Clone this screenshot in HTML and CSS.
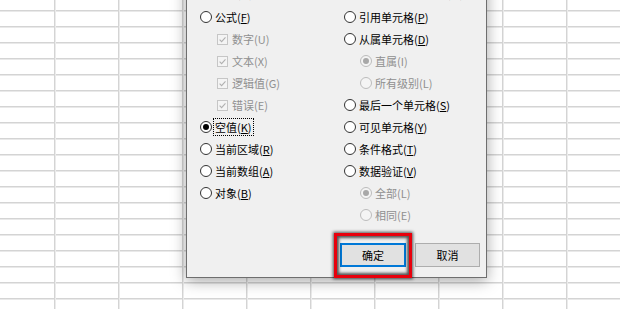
FILE: index.html
```html
<!DOCTYPE html>
<html lang="zh-CN">
<head>
  <meta charset="UTF-8">
  <meta name="viewport" content="width=device-width, initial-scale=1">
  <title>定位条件</title>
  <link rel="stylesheet" href="styles.css">
</head>
<body>
  <div class="sheet">
    <div class="dialog">
      <div class="options">
        <div class="col">
          <div class="opt cut"><span class="radio"></span>常量(<u>O</u>)</div>
          <div class="opt"><span class="radio"></span>公式(<u>F</u>)</div>
          <div class="opt sub off"><span class="check"><svg viewBox="0 0 10 10"><path d="M1.8 5.2 4 7.4 8.3 2.6"/></svg></span>数字(U)</div>
          <div class="opt sub off"><span class="check"><svg viewBox="0 0 10 10"><path d="M1.8 5.2 4 7.4 8.3 2.6"/></svg></span>文本(X)</div>
          <div class="opt sub off"><span class="check"><svg viewBox="0 0 10 10"><path d="M1.8 5.2 4 7.4 8.3 2.6"/></svg></span>逻辑值(G)</div>
          <div class="opt sub off"><span class="check"><svg viewBox="0 0 10 10"><path d="M1.8 5.2 4 7.4 8.3 2.6"/></svg></span>错误(E)</div>
          <div class="opt"><span class="radio on focus-radio"></span><span class="focus">空值(<u>K</u>)</span></div>
          <div class="opt"><span class="radio"></span>当前区域(<u>R</u>)</div>
          <div class="opt"><span class="radio"></span>当前数组(<u>A</u>)</div>
          <div class="opt"><span class="radio"></span>对象(<u>B</u>)</div>
        </div>
        <div class="col">
          <div class="opt cut"><span class="radio"></span>列内容差异单元格(<u>M</u>)</div>
          <div class="opt"><span class="radio"></span>引用单元格(<u>P</u>)</div>
          <div class="opt"><span class="radio"></span>从属单元格(<u>D</u>)</div>
          <div class="opt sub off"><span class="radio on"></span>直属(I)</div>
          <div class="opt sub off"><span class="radio"></span>所有级别(L)</div>
          <div class="opt"><span class="radio"></span>最后一个单元格(<u>S</u>)</div>
          <div class="opt"><span class="radio"></span>可见单元格(<u>Y</u>)</div>
          <div class="opt"><span class="radio"></span>条件格式(<u>T</u>)</div>
          <div class="opt"><span class="radio"></span>数据验证(<u>V</u>)</div>
          <div class="opt sub off"><span class="radio on"></span>全部(L)</div>
          <div class="opt sub off"><span class="radio"></span>相同(E)</div>
        </div>
      </div>
      <div class="actions">
        <span class="mark"><button class="btn btn-default">确定</button></span>
        <button class="btn">取消</button>
      </div>
    </div>
  </div>
</body>
</html>
```

FILE: styles.css
```css
body {
  margin: 0;
  font-family: "Noto Sans CJK SC", "Noto Sans", sans-serif;
  font-size: 11px;
  color: #000;
}

.sheet {
  position: relative;
  width: 620px;
  height: 309px;
  overflow: hidden;
  background-color: #fff;
  background-image:
    linear-gradient(to right, #d4d4d4 0 1px, #ebebeb 1px 2px, transparent 2px),
    linear-gradient(to bottom, #d4d4d4 0 1px, #e9e9e9 1px 2px, transparent 2px);
  background-size: 64px 100%, 100% 16px;
  background-position: 54px 0, 0 10px;
}

.dialog {
  position: absolute;
  left: 186px;
  top: -20px;
  width: 293px;
  background: #f0f0f0;
  border: 1px solid #6e6e6e;
  padding: 1px 6px 10px 0;
  box-shadow: 0 3px 14px rgba(0, 0, 0, 0.35);
}

.options {
  display: grid;
  grid-template-columns: 144px 1fr;
  padding-left: 13px;
}

.opt {
  display: flex;
  align-items: center;
  height: 22px;
  white-space: nowrap;
}

.opt.cut {
  padding-bottom: 2px;
}

.opt u {
  text-decoration-thickness: 1px;
  text-underline-offset: 1px;
}

.radio {
  box-sizing: border-box;
  width: 12px;
  height: 12px;
  border: 1px solid #333;
  border-radius: 50%;
  background: #fff;
  margin-right: 3px;
  display: flex;
  align-items: center;
  justify-content: center;
  flex: none;
}

.radio.on::after {
  content: "";
  width: 6px;
  height: 6px;
  border-radius: 50%;
  background: #000;
}

.radio.focus-radio {
  margin-right: 1px;
}

.focus {
  border: 1px dotted #000;
  padding: 0 1px;
  line-height: 16px;
}

.sub {
  padding-left: 16px;
}

.off {
  color: #8f8f8f;
}

.off .radio {
  border-color: #bcbcbc;
  background: #f4f4f4;
}

.off .radio.on::after {
  background: #a8a8a8;
}

.check {
  box-sizing: border-box;
  width: 11px;
  height: 11px;
  border: 1px solid #c6c6c6;
  background: #f4f4f4;
  margin: 0 4px 0 1px;
  flex: none;
}

.check svg {
  display: block;
  width: 9px;
  height: 9px;
  fill: none;
  stroke: #b0b0b0;
  stroke-width: 1.2;
}

.actions {
  display: flex;
  justify-content: flex-end;
  gap: 9px;
  margin-top: 17px;
}

.btn {
  font-family: inherit;
  font-size: 11px;
  color: #000;
  width: 65px;
  height: 24px;
  padding: 0;
  background: #e1e1e1;
  border: 1px solid #adadad;
}

.btn-default {
  width: 66px;
  border: 2px solid #0078d7;
  box-shadow: inset 0 0 0 1px #e1e1e1;
}

.mark {
  position: relative;
  display: flex;
}

.mark::after {
  content: "";
  position: absolute;
  left: -6px;
  right: -6px;
  top: -10px;
  bottom: -11px;
  border: 3px solid #e8000c;
  box-shadow: 0 0 3px 1px rgba(0, 0, 0, 0.65), inset 0 0 3px 2px rgba(0, 0, 0, 0.65);
  pointer-events: none;
}
```
